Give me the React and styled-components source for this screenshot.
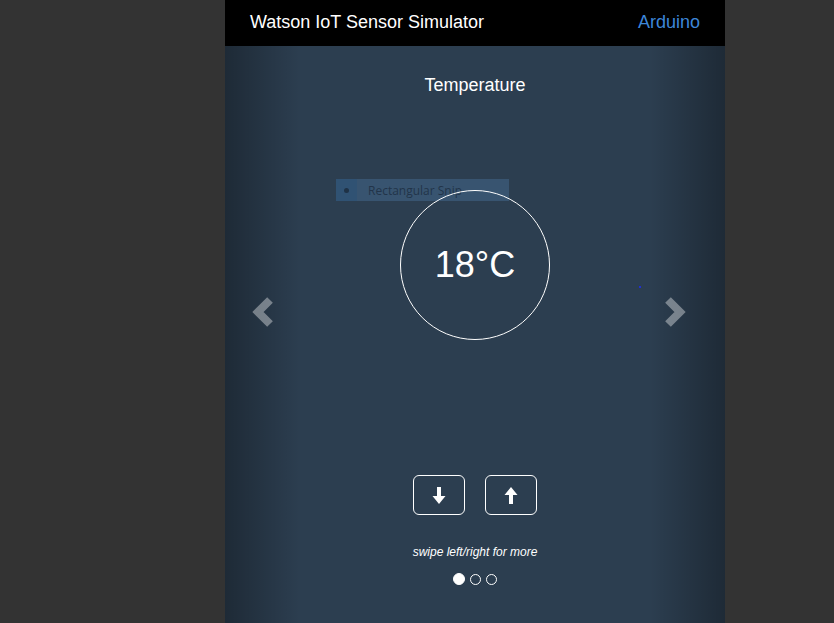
import React from "react";
import styled, { createGlobalStyle } from "styled-components";

const Global = createGlobalStyle`
  html, body { margin: 0; padding: 0; background: #333333; height: 100%; overflow: hidden; }
  #root { height: 100%; }
  * { box-sizing: border-box; }
`;

const Frame = styled.div`
  width: 500px;
  height: 623px;
  margin: 0 0 0 225px;
  display: flex;
  flex-direction: column;
  font-family: "Liberation Sans", Arial, sans-serif;
  color: #fff;
`;

const Header = styled.header`
  height: 46px;
  flex: none;
  background: #000;
  display: flex;
  align-items: center;
  justify-content: space-between;
  padding: 0 25px 2px;
  font-size: 18px;
`;

const Brand = styled.span`
  color: #fff;
`;

const NavLink = styled.a`
  color: #3d86d8;
  text-decoration: none;
`;

const Stage = styled.main`
  flex: 1;
  position: relative;
  background: #2c3e50;
  display: flex;
  flex-direction: column;
  align-items: center;
  overflow: hidden;
`;

const Title = styled.h2`
  margin: 29px 0 0;
  font-size: 18px;
  font-weight: normal;
  line-height: 20px;
`;

const Dial = styled.div`
  margin-top: 95px;
  width: 150px;
  height: 150px;
  border: 1px solid #fff;
  border-radius: 50%;
  display: flex;
  align-items: center;
  justify-content: center;
  font-size: 36px;
  position: relative;
  z-index: 2;
`;

const Buttons = styled.div`
  margin-top: 135px;
  display: flex;
  gap: 20px;
`;

const StepButton = styled.button`
  width: 52px;
  height: 40px;
  border: 1px solid #fff;
  border-radius: 6px;
  background: transparent;
  display: flex;
  align-items: center;
  justify-content: center;
  padding: 0;
  cursor: pointer;
`;

const Hint = styled.p`
  margin: 30px 0 0;
  font-size: 12px;
  line-height: 14px;
  font-style: italic;
`;

const Indicators = styled.ol`
  list-style: none;
  margin: 14px 0 0;
  padding: 0;
  display: flex;
  align-items: center;
  gap: 5px;
`;

const Dot = styled.li`
  width: ${(p) => (p.$active ? "12px" : "11px")};
  height: ${(p) => (p.$active ? "12px" : "11px")};
  border-radius: 50%;
  border: 1px solid #fff;
  background: ${(p) => (p.$active ? "#fff" : "transparent")};
`;

const Control = styled.div`
  position: absolute;
  top: 0;
  bottom: 0;
  width: 75px;
  ${(p) => (p.$side === "left" ? "left: 0;" : "right: 0;")}
  background: linear-gradient(
    ${(p) => (p.$side === "left" ? "to right" : "to left")},
    rgba(0, 0, 0, 0.32),
    rgba(0, 0, 0, 0)
  );
  display: flex;
  justify-content: center;
  padding-top: 250px;
  z-index: 1;
`;

const ChevronWrap = styled.span`
  display: block;
  width: 24px;
  height: 32px;
  margin-left: ${(p) => (p.$side === "left" ? "0" : "-25px")};
`;

const Snip = styled.div`
  position: absolute;
  left: 111px;
  top: 133px;
  width: 173px;
  height: 22px;
  background: rgba(68, 102, 138, 0.55);
  display: flex;
  align-items: center;
  font-family: "Open Sans", "Noto Sans", sans-serif;
  font-size: 12px;
  color: #22344a;
  z-index: 1;
`;

const SnipIcon = styled.span`
  width: 21px;
  height: 22px;
  background: rgba(40, 80, 120, 0.45);
  display: flex;
  align-items: center;
  justify-content: center;
  margin-right: 11px;
  &::after {
    content: "";
    width: 5px;
    height: 5px;
    border-radius: 50%;
    background: #1f3246;
  }
`;

const Speck = styled.span`
  position: absolute;
  left: 414px;
  top: 240px;
  width: 2px;
  height: 2px;
  background: #2030d0;
`;

const Chevron = ({ side }) => (
  <ChevronWrap $side={side}>
    <svg width="24" height="32" viewBox="0 0 24 32">
      <polyline
        points={side === "left" ? "19,4 7,16 19,28" : "5,4 17,16 5,28"}
        fill="none"
        stroke="rgba(255,255,255,0.38)"
        strokeWidth="8"
        strokeLinejoin="miter"
      />
    </svg>
  </ChevronWrap>
);

const Arrow = ({ dir }) => (
  <svg width="14" height="17" viewBox="0 0 14 17">
    {dir === "down" ? (
      <path d="M5 0 H9 V9 H13.5 L7 17 L0.5 9 H5 Z" fill="#fff" />
    ) : (
      <path d="M5 17 H9 V8 H13.5 L7 0 L0.5 8 H5 Z" fill="#fff" />
    )}
  </svg>
);

export default function App() {
  return (
    <>
      <Global />
      <Frame>
        <Header>
          <Brand>Watson IoT Sensor Simulator</Brand>
          <NavLink href="#">Arduino</NavLink>
        </Header>
        <Stage>
          <Control $side="left">
            <Chevron side="left" />
          </Control>
          <Control $side="right">
            <Chevron side="right" />
          </Control>
          <Snip>
            <SnipIcon />
            Rectangular Snip
          </Snip>
          <Speck />
          <Title>Temperature</Title>
          <Dial>18°C</Dial>
          <Buttons>
            <StepButton aria-label="decrease">
              <Arrow dir="down" />
            </StepButton>
            <StepButton aria-label="increase">
              <Arrow dir="up" />
            </StepButton>
          </Buttons>
          <Hint>swipe left/right for more</Hint>
          <Indicators>
            <Dot $active />
            <Dot />
            <Dot />
          </Indicators>
        </Stage>
      </Frame>
    </>
  );
}
